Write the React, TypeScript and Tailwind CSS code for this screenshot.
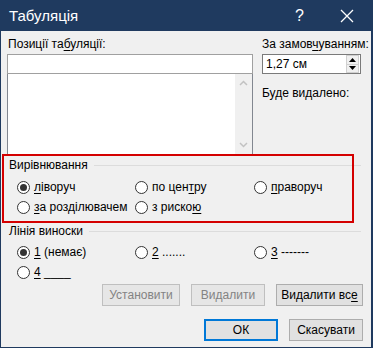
import React from "react";

const font = { fontFamily: '"Segoe UI", "Liberation Sans", Arial, sans-serif' };

function Radio({ checked, children }: { checked?: boolean; children: React.ReactNode }) {
  return (
    <div className="flex items-center h-[20px]">
      <div className="w-[13px] h-[13px] rounded-full border border-[#333] bg-white flex items-center justify-center shrink-0">
        {checked && <div className="w-[7px] h-[7px] rounded-full bg-[#333]" />}
      </div>
      <span className="ml-[4px] text-[12px] leading-[16px] text-black whitespace-nowrap">{children}</span>
    </div>
  );
}

function GroupHeader({ label }: { label: string }) {
  return (
    <div className="flex items-center h-[16px] pl-[8px] pr-[10px]">
      <span className="text-[12px] leading-[16px] text-black whitespace-nowrap">{label}</span>
      <div className="flex-1 h-px bg-[#dcdcdc] ml-[6px]" />
    </div>
  );
}

function Btn({ children, disabled, primary, w }: { children: React.ReactNode; disabled?: boolean; primary?: boolean; w: string }) {
  return (
    <div
      className={
        "h-[22px] flex items-center justify-center text-[12px] leading-[16px] " +
        w +
        " " +
        (primary
          ? "border-2 border-[#0078d7] bg-[#e1e1e1] text-black"
          : disabled
          ? "border border-[#bfbfbf] bg-[#e6e6e6] text-[#838383]"
          : "border border-[#adadad] bg-[#e1e1e1] text-black")
      }
    >
      {children}
    </div>
  );
}

export default function App() {
  return (
    <div className="w-[373px] h-[348px] flex flex-col overflow-hidden" style={font}>
      {/* Title bar */}
      <div className="h-[31px] bg-[#1f3a5f] flex items-center text-white shrink-0">
        <span className="ml-[9px] text-[15px] leading-[20px]">Табуляція</span>
        <div className="flex-1" />
        <span className="text-[16px] leading-[20px] mr-[36px]">?</span>
        <svg width="14" height="14" viewBox="0 0 14 14" className="mr-[19px]">
          <path d="M1 1 L13 13 M13 1 L1 13" stroke="white" strokeWidth="1.3" />
        </svg>
      </div>

      {/* Body */}
      <div className="flex-1 bg-[#f0f0f0] border-l border-r-2 border-b border-[#1f3a5f] flex flex-col">
        {/* Top section */}
        <div className="flex pt-[5px]">
          <div className="ml-[6px] w-[246px] flex flex-col">
            <div className="text-[12px] leading-[16px] text-black pl-[1px]">
              Позиції та<u className="underline-offset-2">б</u>уляції:
            </div>
            <div className="mt-[2px] h-[20px] bg-white border border-[#a0a0a0]" />
            <div className="h-[81px] bg-white border-l border-r border-b border-[#828790] border-t-0 flex justify-end">
              <div className="w-[17px] bg-[#f0f0f0] flex flex-col items-center justify-between py-[6px]">
                <svg width="9" height="6" viewBox="0 0 9 6">
                  <path d="M1 5 L4.5 1.5 L8 5" stroke="#c2c2c2" strokeWidth="1.5" fill="none" />
                </svg>
                <svg width="9" height="6" viewBox="0 0 9 6">
                  <path d="M1 1 L4.5 4.5 L8 1" stroke="#c2c2c2" strokeWidth="1.5" fill="none" />
                </svg>
              </div>
            </div>
          </div>
          <div className="ml-[9px] flex flex-col">
            <div className="text-[12px] leading-[16px] text-black whitespace-nowrap">
              За замов<u className="underline-offset-2">ч</u>уванням:
            </div>
            <div className="mt-[2px] w-[99px] h-[20px] bg-white border border-[#7a7a7a] flex items-center">
              <span className="ml-[3px] text-[12px] leading-[16px] text-black flex-1">1,27 см</span>
              <div className="w-[13px] h-[18px] mr-[1px] flex flex-col bg-[#f0f0f0] border border-[#d0d0d0]">
                <div className="flex-1 flex items-center justify-center border-b border-[#d0d0d0]">
                  <svg width="7" height="4" viewBox="0 0 7 4"><path d="M0 4 L3.5 0 L7 4 Z" fill="#000" /></svg>
                </div>
                <div className="flex-1 flex items-center justify-center">
                  <svg width="7" height="4" viewBox="0 0 7 4"><path d="M0 0 L3.5 4 L7 0 Z" fill="#000" /></svg>
                </div>
              </div>
            </div>
            <div className="mt-[11px] text-[12px] leading-[16px] text-black whitespace-nowrap">Буде видалено:</div>
          </div>
        </div>

        {/* Alignment group */}
        <div className="relative mt-[2px]">
          <div className="absolute left-[1px] top-[-3px] w-[352px] h-[69px] border-2 border-[#d40000] pointer-events-none" />
          <GroupHeader label="Вирівнювання" />
          <div className="pl-[16px] mt-[4px] grid grid-cols-[118px_119px_1fr]">
            <Radio checked>
              <u className="underline-offset-2">л</u>іворуч
            </Radio>
            <Radio>
              по цен<u className="underline-offset-2">т</u>ру
            </Radio>
            <Radio>
              <u className="underline-offset-2">п</u>раворуч
            </Radio>
            <Radio>
              <u className="underline-offset-2">з</u>а розділювачем
            </Radio>
            <Radio>
              з риско<u className="underline-offset-2">ю</u>
            </Radio>
          </div>
        </div>

        {/* Leader group */}
        <div className="mt-[6px]">
          <GroupHeader label="Лінія виноски" />
          <div className="pl-[16px] mt-[3px] grid grid-cols-[118px_119px_1fr]">
            <Radio checked>
              <u className="underline-offset-2">1</u> (немає)
            </Radio>
            <Radio>
              <u className="underline-offset-2">2</u> .......
            </Radio>
            <Radio>
              <u className="underline-offset-2">3</u> -------
            </Radio>
            <Radio>
              <u className="underline-offset-2">4</u> ____
            </Radio>
          </div>
        </div>

        {/* Buttons */}
        <div className="flex justify-end pr-[8px] mt-[2px] gap-[11px]">
          <Btn disabled w="w-[78px]">Установити</Btn>
          <Btn disabled w="w-[74px]">Видалити</Btn>
          <Btn w="w-[87px]">
            Видалити вс<u className="underline-offset-2">е</u>
          </Btn>
        </div>
        <div className="flex justify-end pr-[8px] mt-[13px] gap-[11px]">
          <Btn primary w="w-[74px]">ОК</Btn>
          <Btn w="w-[74px]">Скасувати</Btn>
        </div>
      </div>
    </div>
  );
}
